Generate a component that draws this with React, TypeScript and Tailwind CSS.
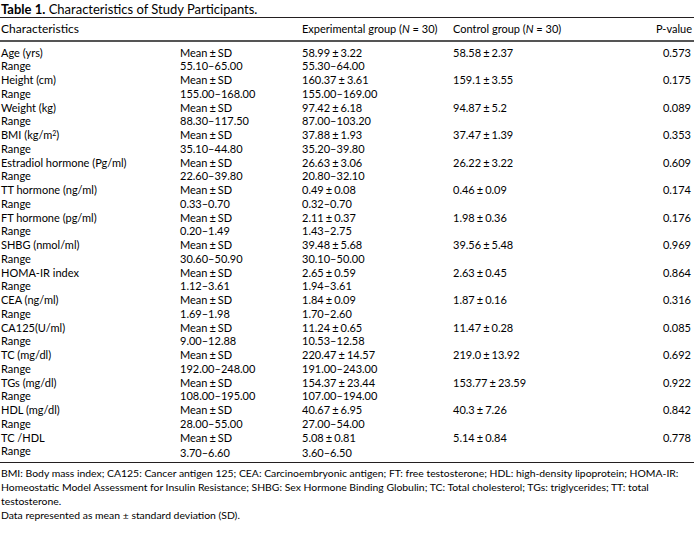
const ROWS: Array<[React.ReactNode, string, string, string, string]> = [
  ["Age (yrs)", "58.99 ± 3.22", "55.10–65.00", "55.30–64.00", "58.58 ± 2.37|0.573"],
  ["Height (cm)", "160.37 ± 3.61", "155.00–168.00", "155.00–169.00", "159.1 ± 3.55|0.175"],
  ["Weight (kg)", "97.42 ± 6.18", "88.30–117.50", "87.00–103.20", "94.87 ± 5.2|0.089"],
  [
    <>
      BMI (kg/m<sup className="text-[7px]">2</sup>)
    </>,
    "37.88 ± 1.93",
    "35.10–44.80",
    "35.20–39.80",
    "37.47 ± 1.39|0.353",
  ],
  ["Estradiol hormone (Pg/ml)", "26.63 ± 3.06", "22.60–39.80", "20.80–32.10", "26.22 ± 3.22|0.609"],
  ["TT hormone (ng/ml)", "0.49 ± 0.08", "0.33–0.70", "0.32–0.70", "0.46 ± 0.09|0.174"],
  ["FT hormone (pg/ml)", "2.11 ± 0.37", "0.20–1.49", "1.43–2.75", "1.98 ± 0.36|0.176"],
  ["SHBG (nmol/ml)", "39.48 ± 5.68", "30.60–50.90", "30.10–50.00", "39.56 ± 5.48|0.969"],
  ["HOMA-IR index", "2.65 ± 0.59", "1.12–3.61", "1.94–3.61", "2.63 ± 0.45|0.864"],
  ["CEA (ng/ml)", "1.84 ± 0.09", "1.69–1.98", "1.70–2.60", "1.87 ± 0.16|0.316"],
  ["CA125(U/ml)", "11.24 ± 0.65", "9.00–12.88", "10.53–12.58", "11.47 ± 0.28|0.085"],
  ["TC (mg/dl)", "220.47 ± 14.57", "192.00–248.00", "191.00–243.00", "219.0 ± 13.92|0.692"],
  ["TGs (mg/dl)", "154.37 ± 23.44", "108.00–195.00", "107.00–194.00", "153.77 ± 23.59|0.922"],
  ["HDL (mg/dl)", "40.67 ± 6.95", "28.00–55.00", "27.00–54.00", "40.3 ± 7.26|0.842"],
  ["TC /HDL", "5.08 ± 0.81", "3.70–6.60", "3.60–6.50", "5.14 ± 0.84|0.778"],
];

function PM({ text }: { text: string }) {
  // narrow gaps round ± like the typeset table
  const parts = text.split(" ± ");
  if (parts.length === 1) return <>{text}</>;
  return (
    <>
      {parts[0]}
      <span className="mx-[2px]">±</span>
      {parts[1]}
    </>
  );
}

export default function App() {
  return (
    <div className="w-[694px] h-[546px] bg-white text-black font-['Lato',sans-serif] text-[11px] leading-[13.75px] overflow-hidden">
      <div className="pl-[1px] pt-[2px] h-[17px] text-[13px] leading-[14px]">
        <span className="font-bold">Table 1.</span> Characteristics of Study Participants.
      </div>
      <table className="w-full border-collapse">
        <colgroup>
          <col className="w-[180px]" />
          <col className="w-[122px]" />
          <col className="w-[151px]" />
          <col className="w-[195px]" />
          <col />
        </colgroup>
        <thead>
          <tr className="border-t border-[#231f20] border-b-2 border-b-[#555]">
            <th className="text-left font-normal pl-[1px] h-[23px] text-[12px]" colSpan={2}>
              Characteristics
            </th>
            <th className="text-left font-normal">
              Experimental group (<i>N</i> = 30)
            </th>
            <th className="text-left font-normal">
              Control group (<i>N</i> = 30)
            </th>
            <th className="text-right font-normal pr-[2px]">P-value</th>
          </tr>
        </thead>
        <tbody>
          {ROWS.map(([label, exp, rng, expRng, ctl], i) => {
            const [ctlVal, p] = ctl.split("|");
            const first = i === 0;
            const last = i === ROWS.length - 1;
            return [
              <tr key={`m${i}`}>
                <td className={`pl-[1px] ${first ? "pt-[4px]" : ""}`}>{label}</td>
                <td className={first ? "pt-[4px]" : ""}>
                  <PM text="Mean ± SD" />
                </td>
                <td className={first ? "pt-[4px]" : ""}>
                  <PM text={exp} />
                </td>
                <td className={first ? "pt-[4px]" : ""}>
                  <PM text={ctlVal} />
                </td>
                <td className={`text-right pr-[3px] ${first ? "pt-[4px]" : ""}`}>{p}</td>
              </tr>,
              <tr key={`r${i}`} className={last ? "border-b border-[#231f20]" : ""}>
                <td className={`pl-[1px] ${last ? "pb-[4px]" : ""}`}>Range</td>
                <td>{rng}</td>
                <td>{expRng}</td>
                <td />
                <td />
              </tr>,
            ];
          })}
        </tbody>
      </table>
      <div className="pl-[1px] pt-[3px] leading-[14px] text-[10.4px]">
        BMI: Body mass index; CA125: Cancer antigen 125; CEA: Carcinoembryonic antigen; FT: free testosterone; HDL: high-density lipoprotein; HOMA-IR:
        <br />
        Homeostatic Model Assessment for Insulin Resistance; SHBG: Sex Hormone Binding Globulin; TC: Total cholesterol; TGs: triglycerides; TT: total
        <br />
        testosterone.
        <br />
        Data represented as mean <PM text="± standard deviation (SD)." />
      </div>
    </div>
  );
}
